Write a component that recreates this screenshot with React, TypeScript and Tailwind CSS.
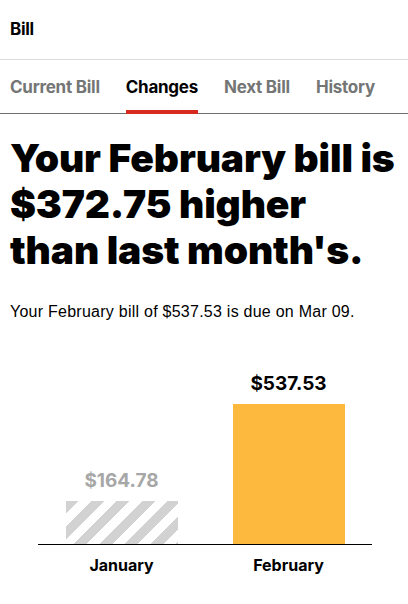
import React from "react";

const tabs = ["Current Bill", "Changes", "Next Bill", "History"];

const bars = [
  { month: "January", amount: 164.78, current: false },
  { month: "February", amount: 537.53, current: true },
];

const MAX_HEIGHT = 140;

export default function App() {
  const max = Math.max(...bars.map((b) => b.amount));
  return (
    <div
      className="w-[408px] h-[604px] bg-white text-black overflow-hidden"
      style={{ fontFamily: "Inter, 'Liberation Sans', Arial, sans-serif" }}
    >
      <header className="h-[60px] flex items-center px-[10px] border-b border-[#dcdcdc]">
        <span className="text-[17px] font-bold tracking-[-0.3px]">Bill</span>
      </header>

      <nav className="h-[54px] flex items-end gap-[26px] px-[10px] border-b border-[#6f7171]">
        {tabs.map((t) => {
          const active = t === "Changes";
          return (
            <div key={t} className="relative h-full flex items-center pt-[2px]">
              <span
                className={
                  "text-[17px] font-bold tracking-[-0.25px] " +
                  (active ? "text-black" : "text-[#747676]")
                }
              >
                {t}
              </span>
              {active && (
                <span className="absolute left-0 right-0 bottom-[-1px] h-[4px] bg-[#d52b1e]" />
              )}
            </div>
          );
        })}
      </nav>

      <h1 className="px-[10px] pt-[21px] text-[39px] leading-[46px] font-black tracking-[-0.15px] whitespace-nowrap">
        Your February bill is
        <br />
        $372.75 higher
        <br />
        than last month's.
      </h1>

      <p
        className="px-[10px] mt-[29px] text-[16px] leading-[20px] tracking-[0.25px]"
        style={{ fontFamily: "'Liberation Sans', Arial, sans-serif" }}
      >
        Your February bill of $537.53 is due on Mar 09.
      </p>

      <div className="ml-[38px] w-[334px] mt-[51px]">
        <div className="grid grid-cols-2 items-end border-b border-black">
          {bars.map((b) => (
            <div key={b.month} className="flex flex-col items-center">
              <span
                className={
                  "text-[19px] font-bold leading-[22px] mb-[9px] " +
                  (b.current ? "text-black" : "text-[#a7a7a7]")
                }
              >
                ${b.amount.toFixed(2)}
              </span>
              {b.current ? (
                <div
                  className="w-[112px] bg-[#fdb93d]"
                  style={{ height: Math.round((b.amount / max) * MAX_HEIGHT) }}
                />
              ) : (
                <div
                  className="w-[112px] bg-[repeating-linear-gradient(135deg,#d2d2d2_0px,#d2d2d2_9px,#ffffff_9px,#ffffff_18px)]"
                  style={{ height: Math.round((b.amount / max) * MAX_HEIGHT) }}
                />
              )}
            </div>
          ))}
        </div>
        <div className="grid grid-cols-2 mt-[8px]">
          {bars.map((b) => (
            <span key={b.month} className="text-center text-[16px] leading-[24px] font-bold">
              {b.month}
            </span>
          ))}
        </div>
      </div>
    </div>
  );
}
